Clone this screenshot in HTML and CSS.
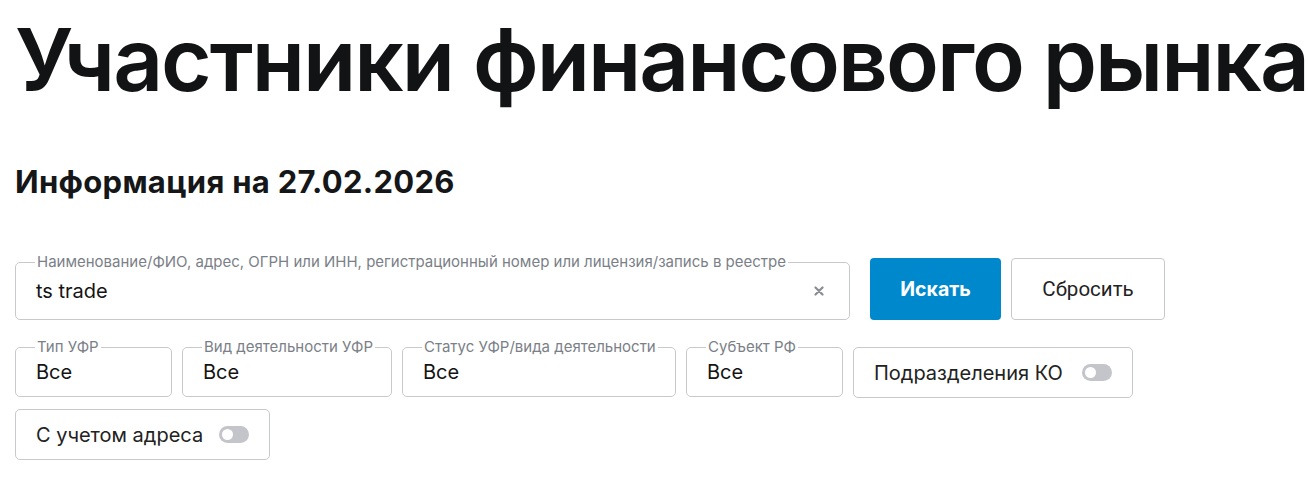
FILE: index.html
```html
<!DOCTYPE html>
<html lang="ru">
<head>
<meta charset="utf-8">
<link rel="stylesheet" href="styles.css">
</head>
<body>
<main class="page">
  <h1 class="title">Участники финансового рынка</h1>
  <h2 class="subtitle">Информация на 27.02.2026</h2>
  <form class="filters">
    <div class="search-row">
      <fieldset class="field field-search">
        <legend>Наименование/ФИО, адрес, ОГРН или ИНН, регистрационный номер или лицензия/запись в реестре</legend>
        <span class="value">ts trade</span>
        <span class="clear">
          <svg width="10" height="10" viewBox="0 0 10 10"><path d="M1.5 1.5 L8.5 8.5 M8.5 1.5 L1.5 8.5" stroke="#8a8d93" stroke-width="2.2" stroke-linecap="round"/></svg>
        </span>
      </fieldset>
      <button type="button" class="btn btn-primary">Искать</button>
      <button type="button" class="btn btn-secondary">Сбросить</button>
    </div>
    <div class="select-row">
      <fieldset class="field field-select w-type"><legend>Тип УФР</legend><span class="value">Все</span></fieldset>
      <fieldset class="field field-select w-kind"><legend>Вид деятельности УФР</legend><span class="value">Все</span></fieldset>
      <fieldset class="field field-select w-status"><legend>Статус УФР/вида деятельности</legend><span class="value">Все</span></fieldset>
      <fieldset class="field field-select w-region"><legend>Субъект РФ</legend><span class="value">Все</span></fieldset>
      <div class="toggle-box w-ko"><span class="toggle-label">Подразделения КО</span><span class="switch"><span class="knob"></span></span></div>
      <div class="toggle-box w-addr"><span class="toggle-label">С учетом адреса</span><span class="switch"><span class="knob"></span></span></div>
    </div>
  </form>
</main>
</body>
</html>
```

FILE: styles.css
```css
* { box-sizing: border-box; }
html, body { margin: 0; padding: 0; background: #fff; }
body { font-family: Inter, "Noto Sans", sans-serif; color: #141414; }

.page { padding: 0 0 0 15px; }

.title {
  margin: 0;
  padding-top: 8px;
  font-family: Inter, sans-serif;
  font-weight: 600;
  font-size: 87px;
  line-height: 104px;
  letter-spacing: -2px;
  color: #121314;
  white-space: nowrap;
}

.subtitle {
  margin: 52px 0 0 0;
  font-family: Inter, sans-serif;
  font-weight: 700;
  font-size: 31px;
  line-height: 36px;
  letter-spacing: 0.3px;
  color: #151618;
}

.filters { margin-top: 58px; }

.search-row { display: flex; align-items: flex-start; }

.field {
  margin: 0;
  border: 1px solid #c8c9cc;
  border-radius: 5px;
  padding: 0 19px 0 20px;
  min-width: 0;
}
.field legend {
  padding: 0 2px;
  margin-left: -1px;
  font-size: 15px;
  line-height: 16px;
  color: #7b7f88;
  white-space: nowrap;
}
.value {
  font-family: Inter, sans-serif;
  font-size: 20px;
  color: #141414;
}

.field-search {
  width: 835px;
  height: 66px;
  margin-top: -4px;
  display: flex;
  align-items: center;
  justify-content: space-between;
  padding-bottom: 8px;
  padding-right: 25px;
}
.clear { display: flex; align-items: center; }

.btn {
  height: 62px;
  border-radius: 4px;
  font-family: Roboto, sans-serif;
  font-size: 20.5px;
  cursor: pointer;
}
.btn-primary {
  margin-left: 20px;
  width: 131px;
  background: #0088cc;
  border: 0;
  color: #fff;
  font-weight: 700;
  font-family: Inter, sans-serif;
  font-size: 19.5px;
}
.btn-secondary {
  margin-left: 10px;
  width: 154px;
  background: #fff;
  border: 1px solid #c8c9cc;
  color: #222;
  font-weight: 400;
}

.select-row {
  display: flex;
  flex-wrap: wrap;
  column-gap: 10px;
  row-gap: 11px;
  margin-top: 27px;
  width: 1140px;
}
.field-select {
  height: 58px;
  margin-top: -8px;
  display: flex;
  align-items: center;
  padding-bottom: 8px;
}
.w-type { width: 157px; }
.w-kind { width: 210px; }
.w-status { width: 274px; }
.w-region { width: 157px; }

.toggle-box {
  height: 51px;
  border: 1px solid #c8c9cc;
  border-radius: 5px;
  display: flex;
  align-items: center;
  padding: 0 20px 0 20px;
}
.w-ko { width: 280px; }
.w-addr { width: 255px; }
.toggle-label {
  font-family: Inter, sans-serif;
  font-size: 20px;
  color: #222;
  flex: 1;
}
.switch {
  width: 30px;
  height: 17px;
  border-radius: 9px;
  background: #c3c5ca;
  position: relative;
  flex: none;
}
.knob {
  position: absolute;
  top: 3px;
  left: 3px;
  width: 11px;
  height: 11px;
  border-radius: 50%;
  background: #fff;
}
```
